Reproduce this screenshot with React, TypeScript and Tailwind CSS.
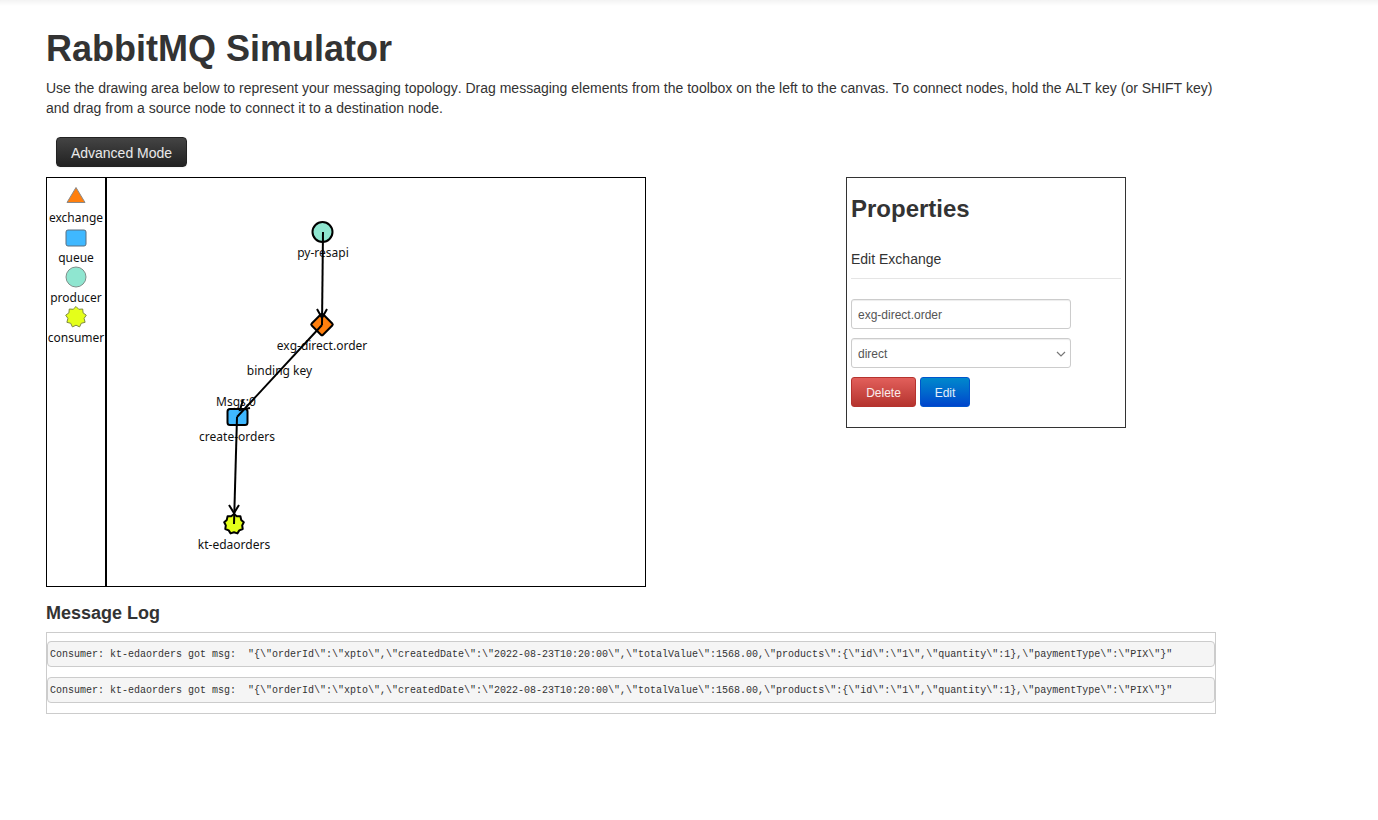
import React from 'react'

const LOG_LINE =
  'Consumer: kt-edaorders got msg:  "{\\"orderId\\":\\"xpto\\",\\"createdDate\\":\\"2022-08-23T10:20:00\\",\\"totalValue\\":1568.00,\\"products\\":{\\"id\\":\\"1\\",\\"quantity\\":1},\\"paymentType\\":\\"PIX\\"}"'

// Spiky blob used for consumer nodes
const starPoints = (cx: number, cy: number, outer: number, inner: number, spikes = 9) => {
  const pts: string[] = []
  for (let i = 0; i < spikes * 2; i++) {
    const r = i % 2 === 0 ? outer : inner
    const a = (Math.PI * i) / spikes - Math.PI / 2
    pts.push(`${(cx + r * Math.cos(a)).toFixed(1)},${(cy + r * Math.sin(a)).toFixed(1)}`)
  }
  return pts.join(' ')
}

const Palette = () => (
  <div className="flex w-[60px] shrink-0 flex-col items-center border-r-2 border-black font-['Noto_Sans',sans-serif] text-[12px] leading-[16px] text-[#111]">
    <svg width="22" height="20" viewBox="0 0 22 20" className="mt-[8px] block">
      <path d="M11 1.5 L20 16.5 L2 16.5 Z" fill="#ff7f0e" stroke="#8a8a8a" strokeWidth="1" />
    </svg>
    <span className="mt-[4px] h-[16px]">exchange</span>
    <svg width="22" height="18" viewBox="0 0 22 18" className="mt-[3px] block">
      <rect x="1" y="1" width="20" height="16" rx="2" fill="#3fb8ff" stroke="#5a6f80" strokeWidth="1" />
    </svg>
    <span className="mt-[3px] h-[16px]">queue</span>
    <svg width="22" height="22" viewBox="0 0 22 22" className="mt-[0px] block">
      <circle cx="11" cy="11" r="10" fill="#8fe6d0" stroke="#7f8f8a" strokeWidth="1" />
    </svg>
    <span className="mt-[2px] h-[16px]">producer</span>
    <svg width="22" height="22" viewBox="0 0 22 22" className="mt-[0px] block">
      <polygon points={starPoints(11, 11, 10.5, 8.2)} fill="#e4ff1a" stroke="#7f8a40" strokeWidth="1" strokeLinejoin="round" />
    </svg>
    <span className="mt-[2px] h-[16px]">consumer</span>
  </div>
)

const Topology = () => (
  <div className="relative flex-1 font-['Noto_Sans',sans-serif] text-[12px] leading-[16px] text-[#111]">
    <span className="absolute left-[216px] top-[67px] -translate-x-1/2 whitespace-nowrap">py-resapi</span>
    <span className="absolute left-[215px] top-[160px] -translate-x-1/2 whitespace-nowrap">exg-direct.order</span>
    <span className="absolute left-[172.5px] top-[185px] -translate-x-1/2 whitespace-nowrap">binding key</span>
    <span className="absolute left-[129px] top-[216px] -translate-x-1/2 whitespace-nowrap">Msgs:0</span>
    <span className="absolute left-[130px] top-[251px] -translate-x-1/2 whitespace-nowrap">create-orders</span>
    <span className="absolute left-[127px] top-[359px] -translate-x-1/2 whitespace-nowrap">kt-edaorders</span>
    {/* viewBox uses page coordinates so nodes read the same as the screenshot */}
    <svg className="absolute inset-0 h-full w-full" viewBox="107 178 538 408">
      <circle cx="322.5" cy="232" r="10" fill="#8fe6d0" stroke="#000" strokeWidth="2" />
      <rect
        x="314"
        y="316.5"
        width="16"
        height="16"
        rx="1.5"
        transform="rotate(45 322 324.5)"
        fill="#ff7f0e"
        stroke="#000"
        strokeWidth="2"
      />
      <rect x="227.5" y="409" width="20" height="16" rx="2.5" fill="#3fb8ff" stroke="#000" strokeWidth="2" />
      <polygon points={starPoints(234, 524, 10, 8.3)} fill="#e4ff1a" stroke="#000" strokeWidth="2" strokeLinejoin="round" />
      <g fill="none" stroke="#000" strokeWidth="2">
        <path d="M323 232 L322 325" />
        <path d="M317 309 L322 318 L327 309" />
        <path d="M322 325 L237 417" />
        <path d="M243 400 L240 410 L250 408" />
        <path d="M237 417 L234 524" />
        <path d="M229 505 L234 513 L239 505" />
      </g>
    </svg>
  </div>
)

const Properties = () => (
  <div className="h-[251px] w-[280px] border border-[#333] px-[4px] font-['Liberation_Sans',sans-serif] text-[#333]">
    <h2 className="mt-[17px] text-[24px] font-bold leading-[28px]">Properties</h2>
    <p className="mt-[26px] text-[14px] leading-[20px]">Edit Exchange</p>
    <hr className="mt-[9px] w-[270px] border-t border-[#e5e5e5]" />
    <input
      readOnly
      value="exg-direct.order"
      className="mt-[20px] block h-[30px] w-[220px] rounded-[3px] border border-[#ccc] bg-white px-[6px] pt-[2px] text-[12px] text-[#555] shadow-[inset_0_1px_1px_rgba(0,0,0,0.075)] outline-none"
    />
    <div className="relative mt-[9px] h-[30px] w-[220px]">
      <select
        defaultValue="direct"
        className="block h-[30px] w-[220px] appearance-none rounded-[3px] border border-[#ccc] bg-white px-[6px] pt-[2px] text-[12px] text-[#555] shadow-[inset_0_1px_1px_rgba(0,0,0,0.075)] outline-none"
      >
        <option value="direct">direct</option>
        <option value="fanout">fanout</option>
        <option value="topic">topic</option>
      </select>
      <svg width="10" height="6" viewBox="0 0 10 6" className="pointer-events-none absolute right-[5px] top-[13px]">
        <path d="M1 1 L5 5 L9 1" fill="none" stroke="#777" strokeWidth="1.2" />
      </svg>
    </div>
    <div className="mt-[9px] flex gap-[4px]">
      <button className="h-[30px] w-[65px] rounded-[3px] border border-[#b5332e] bg-gradient-to-b from-[#e25f5b] to-[#b5332e] pt-[2px] text-[12px] text-white/90">
        Delete
      </button>
      <button className="h-[30px] w-[50px] rounded-[3px] border border-[#0055cc] bg-gradient-to-b from-[#0088cc] to-[#0044cc] pt-[2px] text-[12px] text-white/90">
        Edit
      </button>
    </div>
  </div>
)

export default function App() {
  return (
    <div className="min-h-[820px] bg-white font-['Liberation_Sans',sans-serif] text-[#333]">
      <div className="h-[6px] bg-gradient-to-b from-[#f3f3f3] to-white" />
      <div className="w-[1216px] pl-[46px]">
        <h1 className="mt-[23px] text-[36px] font-bold leading-[40px]">RabbitMQ Simulator</h1>
        <p className="mt-[9px] w-[1170px] text-[14px] leading-[20px] [font-kerning:none]">
          Use the drawing area below to represent your messaging topology. Drag messaging elements from the toolbox on
          the left to the canvas. To connect nodes, hold the ALT key (or SHIFT key) and drag from a source node to connect
          it to a destination node.
        </p>
        <button className="ml-[10px] mt-[19px] block h-[30px] w-[131px] rounded-[4px] border border-[#222] bg-gradient-to-b from-[#444] to-[#222] pt-[2px] text-[14px] text-white/90 shadow-[0_1px_2px_rgba(0,0,0,0.05)]">
          Advanced Mode
        </button>
        <div className="mt-[10px] flex items-start gap-[200px]">
          <div className="flex h-[410px] w-[600px] border border-black">
            <Palette />
            <Topology />
          </div>
          <Properties />
        </div>
        <h3 className="mt-[15px] text-[18px] font-bold leading-[22px]">Message Log</h3>
        <div className="mt-[8px] flex h-[82px] w-[1170px] flex-col gap-[10px] border border-[#ccc] pt-[8px]">
          {[0, 1].map((i) => (
            <pre
              key={i}
              className="h-[26px] rounded-[4px] border border-[#ccc] bg-[#f5f5f5] pl-[2px] font-['Liberation_Mono',monospace] text-[10px] leading-[26px] text-[#333]"
            >
              {LOG_LINE}
            </pre>
          ))}
        </div>
      </div>
    </div>
  )
}
